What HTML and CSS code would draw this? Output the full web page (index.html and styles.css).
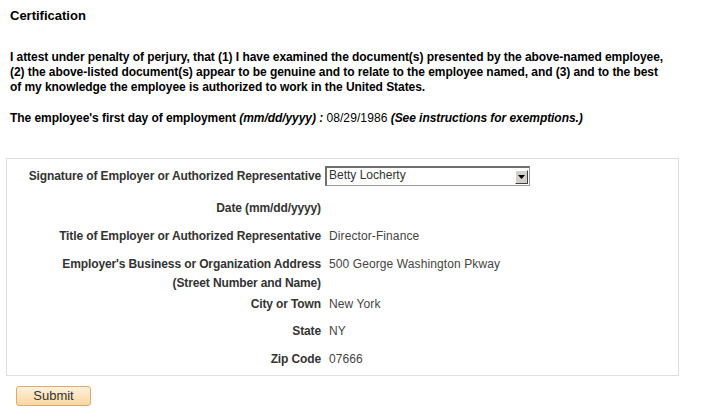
FILE: index.html
```html
<!DOCTYPE html>
<html>
<head>
<meta charset="utf-8">
<link rel="stylesheet" href="styles.css">
</head>
<body>
<div class="page">
  <h1 class="title">Certification</h1>
  <p class="attest">I attest under penalty of perjury, that (1) I have examined the document(s) presented by the above-named employee,<br>(2) the above-listed document(s) appear to be genuine and to relate to the employee named, and (3) and to the best<br>of my knowledge the employee is authorized to work in the United States.</p>
  <p class="firstday">The employee's first day of employment <em>(mm/dd/yyyy) :</em> <span class="plain">08/29/1986</span> <em>(See instructions for exemptions.)</em></p>

  <div class="box">
    <div class="row row-sig">
      <div class="label">Signature of Employer or Authorized Representative</div>
      <div class="select">
        <span class="select-text">Betty Locherty</span>
        <span class="select-btn"><svg width="7" height="4" viewBox="0 0 7 4"><path d="M0 0H7L3.5 4Z" fill="#000"/></svg></span>
      </div>
    </div>
    <div class="row g15">
      <div class="label">Date (mm/dd/yyyy)</div>
      <div class="value"></div>
    </div>
    <div class="row g14">
      <div class="label">Title of Employer or Authorized Representative</div>
      <div class="value">Director-Finance</div>
    </div>
    <div class="row g14">
      <div class="label">Employer's Business or Organization Address</div>
      <div class="value">500 George Washington Pkway</div>
    </div>
    <div class="row g5">
      <div class="label">(Street Number and Name)</div>
      <div class="value"></div>
    </div>
    <div class="row g7">
      <div class="label">City or Town</div>
      <div class="value">New York</div>
    </div>
    <div class="row g13">
      <div class="label">State</div>
      <div class="value">NY</div>
    </div>
    <div class="row g14">
      <div class="label">Zip Code</div>
      <div class="value">07666</div>
    </div>
  </div>

  <button class="submit" type="button">Submit</button>
</div>
</body>
</html>
```

FILE: styles.css
```css
html, body {
  margin: 0;
  padding: 0;
  background: #fff;
}
body {
  font-family: "Liberation Sans", Arial, sans-serif;
  font-size: 12px;
  color: #000;
}
.page {
  padding: 0 0 0 6px;
  width: 673px;
}
.title {
  margin: 0;
  padding: 8px 0 0 4px;
  font-size: 13px;
  line-height: 16px;
  font-weight: bold;
  color: #000;
}
.attest {
  margin: 26px 0 0 4px;
  font-weight: bold;
  line-height: 15px;
  letter-spacing: -0.06px;
  white-space: nowrap;
}
.firstday {
  margin: 16px 0 0 4px;
  font-weight: bold;
  line-height: 15px;
  letter-spacing: -0.06px;
  white-space: nowrap;
}
.firstday em {
  font-style: italic;
}
.firstday .plain {
  font-weight: normal;
  letter-spacing: 0.1px;
}
.box {
  margin-top: 32px;
  border: 1px solid #dedede;
  padding: 7px 0 9px 0;
}
.row {
  display: flex;
  align-items: center;
  line-height: 14px;
}
.row-sig {
  height: 20px;
}
.g15 { margin-top: 15px; }
.g14 { margin-top: 14px; }
.g13 { margin-top: 13px; }
.g7 { margin-top: 7px; }
.g5 { margin-top: 5px; }
.label {
  flex: none;
  width: 314px;
  text-align: right;
  font-weight: bold;
  color: #333;
  letter-spacing: -0.12px;
  white-space: nowrap;
}
.value {
  margin-left: 4px;
  padding-left: 4px;
  color: #444;
  letter-spacing: 0.1px;
  min-height: 14px;
}
.select {
  margin-left: 4px;
  width: 205px;
  height: 20px;
  box-sizing: border-box;
  display: flex;
  align-items: center;
  background: #fff;
  border-style: solid;
  border-width: 2px 1px 1px 2px;
  border-color: #6e6e6e #9a9a9a #9a9a9a #6e6e6e;
}
.select-text {
  flex: 1;
  padding-left: 2px;
  color: #333;
  line-height: 14px;
  margin-top: -3px;
}
.select-btn {
  width: 13px;
  height: 14px;
  margin-right: 1px;
  box-sizing: border-box;
  background: #d4d0c8;
  border-style: solid;
  border-width: 1px;
  border-color: #fff #404040 #404040 #fff;
  display: flex;
  align-items: center;
  justify-content: center;
}
.submit {
  display: block;
  margin: 10px 0 0 10px;
  width: 75px;
  height: 20px;
  padding: 0;
  box-sizing: border-box;
  font-family: "Liberation Sans", Arial, sans-serif;
  font-size: 13px;
  line-height: 16px;
  color: #333;
  background: linear-gradient(#fdf1dd, #f9d7a1);
  border: 1px solid #e2a86c;
  border-radius: 3px;
}
```
